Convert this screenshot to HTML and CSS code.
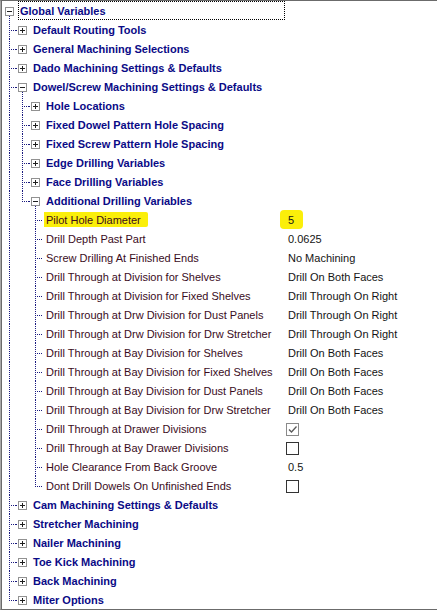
FILE: index.html
```html
<!DOCTYPE html>
<html>
<head>
<meta charset="utf-8">
<link rel="stylesheet" href="styles.css">
</head>
<body>
<div class="tree">
  <div class="row"><div class="node"><span class="bx open"><span class="box minus"></span></span><span class="lbl cat focus">Global Variables</span></div></div>

  <div class="row"><div class="node"><span class="g t"></span><span class="bx lead"><span class="box plus"></span></span><span class="lbl cat">Default Routing Tools</span></div></div>
  <div class="row"><div class="node"><span class="g t"></span><span class="bx lead"><span class="box plus"></span></span><span class="lbl cat">General Machining Selections</span></div></div>
  <div class="row"><div class="node"><span class="g t"></span><span class="bx lead"><span class="box plus"></span></span><span class="lbl cat">Dado Machining Settings &amp; Defaults</span></div></div>
  <div class="row"><div class="node"><span class="g t"></span><span class="bx lead open"><span class="box minus"></span></span><span class="lbl cat">Dowel/Screw Machining Settings &amp; Defaults</span></div></div>

  <div class="row"><div class="node"><span class="g v"></span><span class="g t"></span><span class="bx lead"><span class="box plus"></span></span><span class="lbl cat">Hole Locations</span></div></div>
  <div class="row"><div class="node"><span class="g v"></span><span class="g t"></span><span class="bx lead"><span class="box plus"></span></span><span class="lbl cat">Fixed Dowel Pattern Hole Spacing</span></div></div>
  <div class="row"><div class="node"><span class="g v"></span><span class="g t"></span><span class="bx lead"><span class="box plus"></span></span><span class="lbl cat">Fixed Screw Pattern Hole Spacing</span></div></div>
  <div class="row"><div class="node"><span class="g v"></span><span class="g t"></span><span class="bx lead"><span class="box plus"></span></span><span class="lbl cat">Edge Drilling Variables</span></div></div>
  <div class="row"><div class="node"><span class="g v"></span><span class="g t"></span><span class="bx lead"><span class="box plus"></span></span><span class="lbl cat">Face Drilling Variables</span></div></div>
  <div class="row"><div class="node"><span class="g v"></span><span class="g l"></span><span class="bx lead open"><span class="box minus"></span></span><span class="lbl cat">Additional Drilling Variables</span></div></div>

  <div class="row"><div class="node"><span class="g v"></span><span class="g"></span><span class="g t"></span><span class="lbl prop"><span class="hl">Pilot Hole Diameter</span></span></div><div class="val"><span class="hlv">5</span></div></div>
  <div class="row"><div class="node"><span class="g v"></span><span class="g"></span><span class="g t"></span><span class="lbl prop">Drill Depth Past Part</span></div><div class="val">0.0625</div></div>
  <div class="row"><div class="node"><span class="g v"></span><span class="g"></span><span class="g t"></span><span class="lbl prop">Screw Drilling At Finished Ends</span></div><div class="val">No Machining</div></div>
  <div class="row"><div class="node"><span class="g v"></span><span class="g"></span><span class="g t"></span><span class="lbl prop">Drill Through at Division for Shelves</span></div><div class="val">Drill On Both Faces</div></div>
  <div class="row"><div class="node"><span class="g v"></span><span class="g"></span><span class="g t"></span><span class="lbl prop">Drill Through at Division for Fixed Shelves</span></div><div class="val">Drill Through On Right</div></div>
  <div class="row"><div class="node"><span class="g v"></span><span class="g"></span><span class="g t"></span><span class="lbl prop">Drill Through at Drw Division for Dust Panels</span></div><div class="val">Drill Through On Right</div></div>
  <div class="row"><div class="node"><span class="g v"></span><span class="g"></span><span class="g t"></span><span class="lbl prop">Drill Through at Drw Division for Drw Stretcher</span></div><div class="val">Drill Through On Right</div></div>
  <div class="row"><div class="node"><span class="g v"></span><span class="g"></span><span class="g t"></span><span class="lbl prop">Drill Through at Bay Division for Shelves</span></div><div class="val">Drill On Both Faces</div></div>
  <div class="row"><div class="node"><span class="g v"></span><span class="g"></span><span class="g t"></span><span class="lbl prop">Drill Through at Bay Division for Fixed Shelves</span></div><div class="val">Drill On Both Faces</div></div>
  <div class="row"><div class="node"><span class="g v"></span><span class="g"></span><span class="g t"></span><span class="lbl prop">Drill Through at Bay Division for Dust Panels</span></div><div class="val">Drill On Both Faces</div></div>
  <div class="row"><div class="node"><span class="g v"></span><span class="g"></span><span class="g t"></span><span class="lbl prop">Drill Through at Bay Division for Drw Stretcher</span></div><div class="val">Drill On Both Faces</div></div>
  <div class="row"><div class="node"><span class="g v"></span><span class="g"></span><span class="g t"></span><span class="lbl prop">Drill Through at Drawer Divisions</span></div><div class="val"><span class="chk on"><svg width="11" height="11" viewBox="0 0 11 11"><path d="M2 5.5 L4.5 8 L9.5 2.5" fill="none" stroke="#5a5a5a" stroke-width="1.3"/></svg></span></div></div>
  <div class="row"><div class="node"><span class="g v"></span><span class="g"></span><span class="g t"></span><span class="lbl prop">Drill Through at Bay Drawer Divisions</span></div><div class="val"><span class="chk"></span></div></div>
  <div class="row"><div class="node"><span class="g v"></span><span class="g"></span><span class="g t"></span><span class="lbl prop">Hole Clearance From Back Groove</span></div><div class="val">0.5</div></div>
  <div class="row"><div class="node"><span class="g v"></span><span class="g"></span><span class="g l"></span><span class="lbl prop">Dont Drill Dowels On Unfinished Ends</span></div><div class="val"><span class="chk"></span></div></div>

  <div class="row"><div class="node"><span class="g t"></span><span class="bx lead"><span class="box plus"></span></span><span class="lbl cat">Cam Machining Settings &amp; Defaults</span></div></div>
  <div class="row"><div class="node"><span class="g t"></span><span class="bx lead"><span class="box plus"></span></span><span class="lbl cat">Stretcher Machining</span></div></div>
  <div class="row"><div class="node"><span class="g t"></span><span class="bx lead"><span class="box plus"></span></span><span class="lbl cat">Nailer Machining</span></div></div>
  <div class="row"><div class="node"><span class="g t"></span><span class="bx lead"><span class="box plus"></span></span><span class="lbl cat">Toe Kick Machining</span></div></div>
  <div class="row"><div class="node"><span class="g t"></span><span class="bx lead"><span class="box plus"></span></span><span class="lbl cat">Back Machining</span></div></div>
  <div class="row"><div class="node"><span class="g l"></span><span class="bx lead"><span class="box plus"></span></span><span class="lbl cat">Miter Options</span></div></div>
</div>
</body>
</html>
```
FILE: styles.css
```css
html, body {
  margin: 0;
  padding: 0;
  background: #ffffff;
  overflow: hidden;
}

body {
  font-family: "Liberation Sans", Arial, sans-serif;
  font-size: 11px;
  width: 437px;
  height: 612px;
}

.tree {
  --dv: repeating-linear-gradient(180deg, #1a1a80 0 1px, transparent 1px 2px);
  --dh: repeating-linear-gradient(90deg, #1a1a80 0 1px, transparent 1px 2px);
  width: 100%;
  border-top: 1px solid #6b6b6b;
  border-bottom: 1px solid #6b6b6b;
  border-left: 1px solid #a8a8a8;
  box-shadow: inset 1px 0 0 #6b6b6b;
  padding-left: 2px;
  box-sizing: border-box;
}

.row {
  display: flex;
  height: 19px;
  line-height: 19px;
}

.node {
  display: flex;
  width: 282px;
  flex: none;
  height: 19px;
}

.g, .bx {
  flex: none;
  width: 13px;
  height: 19px;
}

.g.v {
  background: var(--dv) 6px 0 / 1px 100% no-repeat;
}

.g.t {
  background:
    var(--dv) 6px 0 / 1px 100% no-repeat,
    var(--dh) 6px 10px / 7px 1px no-repeat;
}

.g.l {
  background:
    var(--dv) 6px 0 / 1px 10px no-repeat,
    var(--dh) 6px 10px / 7px 1px no-repeat;
}

.bx {
  display: flex;
  align-items: flex-start;
}

.bx.lead {
  background: var(--dh) 0 10px / 2px 1px no-repeat;
}

.bx.open {
  background: var(--dv) 6px 15px / 1px 4px no-repeat;
}

.bx.lead.open {
  background:
    var(--dh) 0 10px / 2px 1px no-repeat,
    var(--dv) 6px 15px / 1px 4px no-repeat;
}

.box {
  display: block;
  width: 9px;
  height: 9px;
  box-sizing: border-box;
  margin: 6px 0 0 2px;
  border: 1px solid #919191;
  background-color: #fff;
}

.box.minus {
  background: #fff linear-gradient(#1f1f1f, #1f1f1f) 1px 3px / 5px 1px no-repeat;
}

.box.plus {
  background:
    linear-gradient(#1f1f1f, #1f1f1f) 1px 3px / 5px 1px no-repeat,
    linear-gradient(#1f1f1f, #1f1f1f) 3px 1px / 1px 5px no-repeat,
    #fff;
}

.lbl {
  flex: 1;
  margin-left: 2px;
  padding: 1px 0 0 2px;
  line-height: 19px;
  white-space: nowrap;
  overflow: hidden;
  box-sizing: border-box;
}

.lbl.cat {
  font-weight: bold;
  color: #0a0a86;
}

.lbl.focus {
  border: 1px dotted #000;
  padding: 1px 0 0 1px;
  line-height: 17px;
}

.lbl.prop {
  color: #3a0c1c;
}

.hl {
  background: #fbef0a;
  padding: 2px 7px 1px 4px;
  margin-left: -4px;
  border-radius: 2px;
}

.val {
  padding: 1px 0 0 3px;
  color: #141414;
  white-space: nowrap;
  display: flex;
  align-items: center;
  box-sizing: border-box;
  height: 19px;
}

.hlv {
  background: #fbef0a;
  padding: 3px 9px 2px 8px;
  margin-left: -8px;
  border-radius: 4px;
  line-height: 14px;
  position: relative;
  top: -1px;
}

.chk {
  display: flex;
  align-items: center;
  justify-content: center;
  width: 13px;
  height: 13px;
  box-sizing: border-box;
  margin: 0 0 0 -2px;
  border: 1px solid #333;
  background: #fff;
}

.chk.on {
  border-color: #8a8a8a;
}
```
